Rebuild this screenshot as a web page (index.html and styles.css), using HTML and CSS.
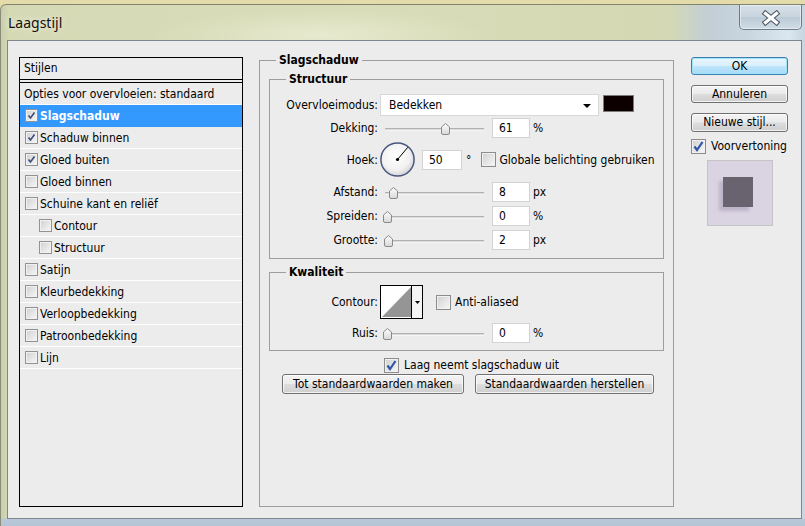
FILE: index.html
```html
<!DOCTYPE html>
<html lang="nl">
<head>
<meta charset="utf-8">
<title>Laagstijl</title>
<link rel="stylesheet" href="styles.css">
</head>
<body>
<div class="window">
  <div class="titlebar">
    <span class="title">Laagstijl</span>
    <div class="close-btn">
      <svg width="20" height="16" viewBox="0 0 20 16">
        <path d="M4.5 3.5 L15.5 12.5 M15.5 3.5 L4.5 12.5" stroke="#505a66" stroke-width="5.4" stroke-linecap="square" fill="none"/>
        <path d="M4.5 3.5 L15.5 12.5 M15.5 3.5 L4.5 12.5" stroke="#ffffff" stroke-width="3.2" stroke-linecap="square" fill="none"/>
      </svg>
    </div>
  </div>
  <div class="client">
    <div class="styles">
      <div class="styles-head">Stijlen</div>
      <div class="styles-list">
        <div class="srow">Opties voor overvloeien: standaard</div>
        <div class="srow sel"><span class="cb on"><svg width="11" height="11" viewBox="0 0 11 11"><path d="M2.5 5.5 L4.5 8 L8.5 2.5" stroke="#3b4d78" stroke-width="1.6" fill="none"/></svg></span>Slagschaduw</div>
        <div class="srow"><span class="cb on"><svg width="11" height="11" viewBox="0 0 11 11"><path d="M2.5 5.5 L4.5 8 L8.5 2.5" stroke="#3b4d78" stroke-width="1.6" fill="none"/></svg></span>Schaduw binnen</div>
        <div class="srow"><span class="cb on"><svg width="11" height="11" viewBox="0 0 11 11"><path d="M2.5 5.5 L4.5 8 L8.5 2.5" stroke="#3b4d78" stroke-width="1.6" fill="none"/></svg></span>Gloed buiten</div>
        <div class="srow"><span class="cb"></span>Gloed binnen</div>
        <div class="srow"><span class="cb"></span>Schuine kant en reliëf</div>
        <div class="srow sub"><span class="cb"></span>Contour</div>
        <div class="srow sub"><span class="cb"></span>Structuur</div>
        <div class="srow"><span class="cb"></span>Satijn</div>
        <div class="srow"><span class="cb"></span>Kleurbedekking</div>
        <div class="srow"><span class="cb"></span>Verloopbedekking</div>
        <div class="srow"><span class="cb"></span>Patroonbedekking</div>
        <div class="srow"><span class="cb"></span>Lijn</div>
      </div>
    </div>

    <div class="group main">
      <div class="legend">Slagschaduw</div>
      <div class="group sub structuur">
        <div class="legend">Structuur</div>
        <div class="frow r-mode">
          <span class="lbl">Overvloeimodus:</span>
          <div class="select"><span>Bedekken</span><span class="caret"></span></div>
          <span class="swatch"></span>
        </div>
        <div class="frow r-slide r-dekking">
          <span class="lbl">Dekking:</span>
          <div class="slider"><div class="track"></div><svg class="thumb" style="left:56px" width="9" height="12" viewBox="0 0 9 12"><path d="M0.5 4 L4.5 0.5 L8.5 4 L8.5 10 Q8.5 11.5 7 11.5 L2 11.5 Q0.5 11.5 0.5 10 Z" fill="url(#tg)" stroke="#8a8a8a"/></svg></div>
          <span class="num">61</span><span class="unit">%</span>
        </div>
        <div class="frow r-angle">
          <span class="lbl">Hoek:</span>
          <svg class="dial" width="35" height="35" viewBox="0 0 35 35">
            <defs>
              <radialGradient id="dg" cx="0.45" cy="0.4" r="0.6">
                <stop offset="0" stop-color="#ffffff"/>
                <stop offset="0.7" stop-color="#f1f1f1"/>
                <stop offset="1" stop-color="#d4d4d8"/>
              </radialGradient>
              <linearGradient id="tg" x1="0" y1="0" x2="0" y2="1">
                <stop offset="0" stop-color="#fdfdfd"/>
                <stop offset="1" stop-color="#d8d8d8"/>
              </linearGradient>
            </defs>
            <circle cx="17.5" cy="17.5" r="16.6" fill="url(#dg)" stroke="#48577d" stroke-width="1.5"/>
            <line x1="17.5" y1="17.5" x2="27.8" y2="5.3" stroke="#000" stroke-width="1"/>
            <circle cx="17.5" cy="17.5" r="1.6" fill="#000"/>
          </svg>
          <span class="num wide">50</span><span class="deg">°</span>
          <span class="cb big glob"></span><span class="cbtext">Globale belichting gebruiken</span>
        </div>
        <div class="frow r-slide r-afstand">
          <span class="lbl">Afstand:</span>
          <div class="slider"><div class="track"></div><svg class="thumb" style="left:4px" width="9" height="12" viewBox="0 0 9 12"><path d="M0.5 4 L4.5 0.5 L8.5 4 L8.5 10 Q8.5 11.5 7 11.5 L2 11.5 Q0.5 11.5 0.5 10 Z" fill="url(#tg)" stroke="#8a8a8a"/></svg></div>
          <span class="num">8</span><span class="unit">px</span>
        </div>
        <div class="frow r-slide r-spreiden">
          <span class="lbl">Spreiden:</span>
          <div class="slider"><div class="track"></div><svg class="thumb" style="left:-2px" width="9" height="12" viewBox="0 0 9 12"><path d="M0.5 4 L4.5 0.5 L8.5 4 L8.5 10 Q8.5 11.5 7 11.5 L2 11.5 Q0.5 11.5 0.5 10 Z" fill="url(#tg)" stroke="#8a8a8a"/></svg></div>
          <span class="num">0</span><span class="unit">%</span>
        </div>
        <div class="frow r-slide r-grootte">
          <span class="lbl">Grootte:</span>
          <div class="slider"><div class="track"></div><svg class="thumb" style="left:-1px" width="9" height="12" viewBox="0 0 9 12"><path d="M0.5 4 L4.5 0.5 L8.5 4 L8.5 10 Q8.5 11.5 7 11.5 L2 11.5 Q0.5 11.5 0.5 10 Z" fill="url(#tg)" stroke="#8a8a8a"/></svg></div>
          <span class="num">2</span><span class="unit">px</span>
        </div>
      </div>

      <div class="group sub kwaliteit">
        <div class="legend">Kwaliteit</div>
        <div class="frow r-contour">
          <span class="lbl">Contour:</span>
          <svg class="contour" width="43" height="34" viewBox="0 0 43 34">
            <rect x="0.5" y="0.5" width="42" height="33" fill="#ffffff" stroke="#000"/>
            <polygon points="2,32 31,2 31,32" fill="#959595"/>
            <line x1="31.5" y1="1" x2="31.5" y2="33" stroke="#000"/>
            <rect x="32" y="1" width="10" height="32" fill="#f4f4f4"/>
            <polygon points="35,16 40,16 37.5,19" fill="#000"/>
          </svg>
          <span class="cb big anti"></span><span class="cbtext">Anti-aliased</span>
        </div>
        <div class="frow r-slide r-ruis">
          <span class="lbl">Ruis:</span>
          <div class="slider"><div class="track"></div><svg class="thumb" style="left:-2px" width="9" height="12" viewBox="0 0 9 12"><path d="M0.5 4 L4.5 0.5 L8.5 4 L8.5 10 Q8.5 11.5 7 11.5 L2 11.5 Q0.5 11.5 0.5 10 Z" fill="url(#tg)" stroke="#8a8a8a"/></svg></div>
          <span class="num">0</span><span class="unit">%</span>
        </div>
      </div>

      <div class="exclude">
        <span class="cb big on"><svg width="13" height="13" viewBox="0 0 13 13"><path d="M2.5 6.5 L5 10 L10.5 2" stroke="#2f56a8" stroke-width="2.2" fill="none"/></svg></span>
        <span class="cbtext">Laag neemt slagschaduw uit</span>
      </div>
      <div class="defaults">
        <button class="btn b-tot">Tot standaardwaarden maken</button>
        <button class="btn b-herstel">Standaardwaarden herstellen</button>
      </div>
    </div>

    <div class="side">
      <button class="btn default b-ok">OK</button>
      <button class="btn b-ann">Annuleren</button>
      <button class="btn b-new">Nieuwe stijl...</button>
      <div class="preview-toggle">
        <span class="cb big on"><svg width="13" height="13" viewBox="0 0 13 13"><path d="M2.5 6.5 L5 10 L10.5 2" stroke="#2f56a8" stroke-width="2.2" fill="none"/></svg></span>
        <span class="cbtext">Voorvertoning</span>
      </div>
      <div class="preview"><div class="preview-sq"></div></div>
    </div>
  </div>
</div>
</body>
</html>
```

FILE: styles.css
```css
* { box-sizing: border-box; }
html, body { margin: 0; padding: 0; }
body {
  width: 805px;
  height: 526px;
  overflow: hidden;
  background: #e3dcaa;
  font-family: "DejaVu Sans Condensed", "Liberation Sans", sans-serif;
  font-stretch: condensed;
  font-size: 12px;
  color: #000;
}

.window {
  height: 522px;
  margin-top: 4px;
  border-top: 1px solid #80846c;
  border-left: 1px solid #8a8e78;
  border-radius: 6px 0 0 0;
  background:
    linear-gradient(to top, #b4c4d4 0, #b9c9d9 7px, rgba(185,201,217,0) 8px),
    radial-gradient(ellipse 170px 26px at 320px 30px, rgba(236,238,214,0.75), rgba(236,238,214,0)),
    linear-gradient(to right, #c9cfae 0, #d5d9b4 1%, #d8dcb8 45%, #d4d9b3 83%, #c3ced6 88%, #c9d6e0 93%, #dbe7ef 98%, #c7d5e1 100%);
}

.titlebar {
  height: 35px;
  display: flex;
  justify-content: space-between;
  align-items: flex-start;
  padding: 0 3px 0 7px;
}
.title {
  font-family: "Noto Sans", "Open Sans", sans-serif;
  font-stretch: normal;
  font-size: 14px;
  line-height: 36px;
  color: #111;
  text-shadow: 0 0 6px rgba(255,255,255,0.9);
}
.close-btn {
  width: 63px;
  height: 25px;
  border: 1px solid #6f7b87;
  border-top: none;
  border-radius: 0 0 5px 5px;
  background: linear-gradient(#d6e0e8 0%, #c9d5de 48%, #bccbd7 52%, #cfdce6 100%);
  box-shadow: inset 0 0 0 1px rgba(255,255,255,0.45);
  display: flex;
  align-items: center;
  justify-content: center;
  padding-top: 1px;
}

.client {
  margin-left: 6px;
  width: 795px;
  height: 479px;
  border: 1px solid #7f878e;
  background: #ececec;
  display: flex;
  align-items: flex-start;
  padding: 16px 0 0 11px;
}

/* Styles list */
.styles {
  width: 224px;
  height: 450px;
  border: 1px solid #000;
  flex: none;
}
.styles-head {
  height: 22px;
  line-height: 21px;
  padding-left: 4px;
  border-bottom: 1px solid #000;
}
.styles-list {
  margin-top: 2px;
  border-top: 1px solid #000;
}
.srow {
  height: 22px;
  border-bottom: 1px solid #ffffff;
  display: flex;
  align-items: center;
  padding-left: 4px;
}
.srow .cb { margin: 0 2px 0 1px; }
.srow.sub { padding-left: 18px; }
.srow.sel {
  background: #3399ff;
  color: #fff;
  font-weight: bold;
  border-bottom-color: #3399ff;
}

.cb {
  width: 13px;
  height: 13px;
  flex: none;
  border: 1px solid #929292;
  background: linear-gradient(135deg, #cfcfcf 0%, #e6e6e6 55%, #f7f7f7 100%);
  box-shadow: inset 0 0 0 1px #f1f1f1;
  display: inline-flex;
  align-items: center;
  justify-content: center;
}
.cb.big { width: 15px; height: 15px; border-color: #8c8c8c; }

/* Group boxes */
.group {
  border: 1px solid #9d9d9d;
  flex: none;
}
.legend {
  width: fit-content;
  margin: -8px 0 0 16px;
  padding: 0 3px;
  line-height: 15px;
  background: #ececec;
  font-weight: bold;
}
.group.main {
  width: 415px;
  height: 447px;
  margin: 3px 0 0 16px;
}
.group.sub {
  width: 395px;
  margin-left: 9px;
}
.structuur { margin-top: 11px; padding-bottom: 8px; }
.kwaliteit { margin-top: 13px; padding-bottom: 7px; }

.frow { display: flex; align-items: center; }
.lbl { width: 108px; flex: none; text-align: right; }
.r-mode { height: 22px; margin-top: 7px; }
.r-dekking { margin-top: 2px; }
.r-angle { height: 35px; margin-top: 4px; }
.r-afstand { margin-top: 5px; }
.r-spreiden, .r-grootte { margin-top: 4px; }
.r-slide { height: 20px; }

.select {
  width: 219px;
  height: 22px;
  margin-left: 2px;
  background: #fff;
  border: 1px solid #d8d8d8;
  display: flex;
  align-items: center;
  justify-content: space-between;
  padding: 0 7px 0 8px;
}
.caret {
  width: 0;
  height: 0;
  border-left: 4px solid transparent;
  border-right: 4px solid transparent;
  border-top: 4px solid #000;
  margin-top: 1px;
}
.swatch {
  width: 31px;
  height: 17px;
  margin-left: 4px;
  align-self: flex-start;
  margin-top: 1px;
  border: 1px solid #7b7b7b;
  background: #0d0000;
}

.slider {
  position: relative;
  width: 99px;
  height: 12px;
  margin: 2px 0 0 7px;
  flex: none;
}
.track {
  margin-top: 5px;
  height: 3px;
  border-top: 1px solid #b2b2b2;
  border-bottom: 1px solid #f6f6f6;
  background: #d9d9d9;
}
.thumb { position: absolute; top: 0; }

.num {
  width: 38px;
  height: 20px;
  margin-left: 8px;
  flex: none;
  background: #fff;
  border: 1px solid #d3d3d3;
  padding-left: 6px;
  line-height: 18px;
}
.num.wide { width: 40px; margin-left: 7px; }
.unit { margin-left: 3px; }
.deg { margin-left: 4px; }
.dial { margin-left: 2px; flex: none; }
.cb.glob { margin-left: 10px; }
.cbtext { margin-left: 3px; }

.r-contour { height: 34px; margin-top: 5px; }
.contour { margin-left: 2px; flex: none; }
.cb.anti { margin-left: 13px; }
.r-contour .cbtext { margin-left: 4px; }
.r-ruis { margin-top: 4px; }

.exclude {
  display: flex;
  align-items: center;
  height: 16px;
  margin-top: 6px;
  padding-left: 124px;
}
.exclude .cbtext { margin-left: 5px; }

.defaults {
  display: flex;
  gap: 11px;
  padding-left: 22px;
  margin-top: 1px;
}

.btn {
  font: inherit;
  color: #000;
  height: 20px;
  padding: 0;
  border: 1px solid #707070;
  border-radius: 3px;
  background: linear-gradient(#f3f3f3 0%, #ebebeb 48%, #dddddd 52%, #cfcfcf 100%);
  box-shadow: inset 0 0 0 1px rgba(255,255,255,0.75);
  line-height: 17px;
  text-align: center;
}
.b-tot { width: 182px; }
.b-herstel { width: 179px; }

.side {
  width: 97px;
  margin-left: 17px;
  display: flex;
  flex-direction: column;
  flex: none;
}
.b-ok { height: 18px; }
.b-ann { height: 18px; margin-top: 10px; }
.b-new { height: 19px; margin-top: 10px; }
.btn.default {
  border-color: #3c7fb1;
  background: linear-gradient(#eaf6fd 0%, #d9f0fc 48%, #bee6fd 52%, #a7d9f5 100%);
  box-shadow: inset 0 0 0 1px #9fe3fb;
}
.preview-toggle {
  display: flex;
  align-items: center;
  height: 16px;
  margin-top: 6px;
}
.preview-toggle .cbtext { margin-left: 5px; }
.preview {
  width: 66px;
  height: 66px;
  margin: 6px 0 0 16px;
  border: 1px solid #c4c4c4;
  background: #d9d3e2;
  padding: 16px 0 0 15px;
}
.preview-sq {
  width: 30px;
  height: 30px;
  background: #68636f;
  box-shadow: -4px 4px 3px #bdb5c8;
}
```
